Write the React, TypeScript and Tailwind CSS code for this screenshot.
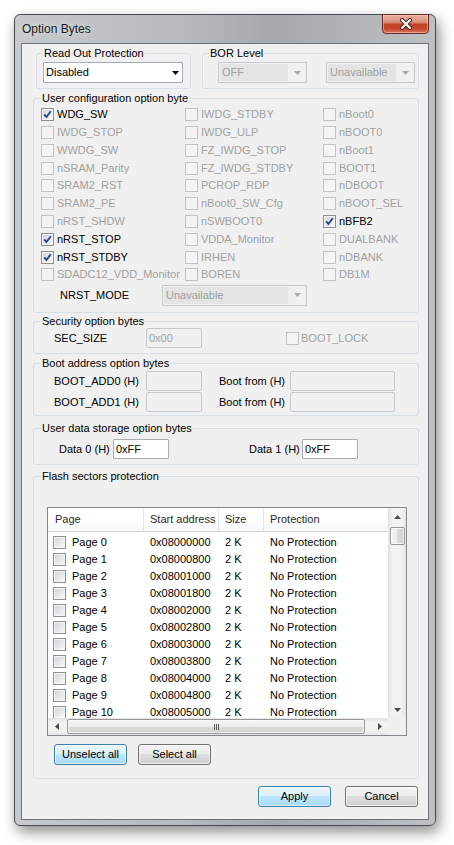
import React from 'react';

const F = "font-['Liberation_Sans',Arial,sans-serif]";

function Tri({ dir, color = '#4b4b4b' }: { dir: 'up' | 'down' | 'left' | 'right'; color?: string }) {
  if (dir === 'up')
    return (
      <svg width="7" height="4" viewBox="0 0 7 4" className="block">
        <path d="M0 4 L3.5 0 L7 4Z" fill={color} />
      </svg>
    );
  if (dir === 'down')
    return (
      <svg width="7" height="4" viewBox="0 0 7 4" className="block">
        <path d="M0 0 L3.5 4 L7 0Z" fill={color} />
      </svg>
    );
  if (dir === 'left')
    return (
      <svg width="4" height="7" viewBox="0 0 4 7" className="block">
        <path d="M4 0 L0 3.5 L4 7Z" fill={color} />
      </svg>
    );
  return (
    <svg width="4" height="7" viewBox="0 0 4 7" className="block">
      <path d="M0 0 L4 3.5 L0 7Z" fill={color} />
    </svg>
  );
}

function CheckMark() {
  return (
    <svg width="13" height="13" viewBox="0 0 13 13" className="absolute left-[-1px] top-[-1px]">
      <path d="M3.2 6.4 L5.4 9 L9.8 3.2" stroke="#2a4590" strokeWidth="1.9" fill="none" />
    </svg>
  );
}

function Box({ checked = false, disabled = false }: { checked?: boolean; disabled?: boolean }) {
  if (disabled)
    return (
      <span className="relative block w-[13px] h-[13px] shrink-0 border border-[#c3c3c3] bg-[#f4f4f4]">
        {checked && <CheckMark />}
      </span>
    );
  return (
    <span className="relative block w-[13px] h-[13px] shrink-0 border border-[#8e8f8f] bg-[#f6f6f6] p-[1px]">
      <span className="block w-full h-full bg-[linear-gradient(135deg,#d3d6da,#f6f6f7)]" />
      {checked && <CheckMark />}
    </span>
  );
}

function Group({
  label,
  cls,
  lx = 'left-[7px]',
  children,
}: {
  label: string;
  cls: string;
  lx?: string;
  children?: React.ReactNode;
}) {
  return (
    <div className={`relative border border-[#d5dfe5] rounded-[3px] ${cls}`}>
      <span className={`absolute top-[-7px] ${lx} px-[1px] bg-[#f0f0f0] leading-[13px] whitespace-nowrap`}>{label}</span>
      {children}
    </div>
  );
}

function Combo({ w, text, disabled = false }: { w: string; text: string; disabled?: boolean }) {
  if (!disabled)
    return (
      <div className={`${w} h-[21px] border border-[#a5acb5] bg-white flex items-center justify-between pl-[2px] pr-[3px] rounded-[1px]`}>
        <span>{text}</span>
        <Tri dir="down" color="#000" />
      </div>
    );
  return (
    <div className={`${w} h-[21px] border border-[#c5c9cd] bg-[#f0f0f0] flex items-center rounded-[1px]`}>
      <div className="flex-1 h-[17px] ml-[1px] bg-[#e4e4e4] text-[#a0a0a0] flex items-center pl-[2px]">{text}</div>
      <div className="w-[18px] flex justify-center">
        <Tri dir="down" color="#a8a8a8" />
      </div>
    </div>
  );
}

function Edit({ w, text = '', disabled = false }: { w: string; text?: string; disabled?: boolean }) {
  if (disabled)
    return (
      <div className={`${w} h-[20px] border border-[#c5c9cd] bg-[#f0f0f0] rounded-[2px] flex items-center pl-[2px] text-[#a0a0a0]`}>
        {text}
      </div>
    );
  return (
    <div className={`${w} h-[20px] border border-[#abadb3] bg-white rounded-[1px] flex items-center pl-[2px]`}>{text}</div>
  );
}

function Btn({ label, blue = false }: { label: string; blue?: boolean }) {
  return blue ? (
    <div className="w-[73px] h-[21px] rounded-[3px] border border-[#3c7fb1] bg-[linear-gradient(#eaf6fd_0%,#d9f0fc_50%,#bee6fd_50%,#a7d9f5_100%)] shadow-[inset_0_0_0_1px_rgba(255,255,255,0.6)] flex items-center justify-center">
      {label}
    </div>
  ) : (
    <div className="w-[73px] h-[21px] rounded-[3px] border border-[#707070] bg-[linear-gradient(#f2f2f2_0%,#ebebeb_50%,#dddddd_50%,#cfcfcf_100%)] shadow-[inset_0_0_0_1px_rgba(255,255,255,0.7)] flex items-center justify-center">
      {label}
    </div>
  );
}

type O = { t: string; c?: boolean; e?: boolean };
const col1: O[] = [
  { t: 'WDG_SW', c: true, e: true },
  { t: 'IWDG_STOP' },
  { t: 'WWDG_SW' },
  { t: 'nSRAM_Parity' },
  { t: 'SRAM2_RST' },
  { t: 'SRAM2_PE' },
  { t: 'nRST_SHDW' },
  { t: 'nRST_STOP', c: true, e: true },
  { t: 'nRST_STDBY', c: true, e: true },
  { t: 'SDADC12_VDD_Monitor' },
];
const col2: O[] = [
  { t: 'IWDG_STDBY' },
  { t: 'IWDG_ULP' },
  { t: 'FZ_IWDG_STOP' },
  { t: 'FZ_IWDG_STDBY' },
  { t: 'PCROP_RDP' },
  { t: 'nBoot0_SW_Cfg' },
  { t: 'nSWBOOT0' },
  { t: 'VDDA_Monitor' },
  { t: 'IRHEN' },
  { t: 'BOREN' },
];
const col3: O[] = [
  { t: 'nBoot0' },
  { t: 'nBOOT0' },
  { t: 'nBoot1' },
  { t: 'BOOT1' },
  { t: 'nDBOOT' },
  { t: 'nBOOT_SEL' },
  { t: 'nBFB2', c: true, e: true },
  { t: 'DUALBANK' },
  { t: 'nDBANK' },
  { t: 'DB1M' },
];

function Opt({ o }: { o: O }) {
  return (
    <div className="flex items-center h-[17.78px] gap-[3px] whitespace-nowrap">
      <Box checked={!!o.c} disabled={!o.e} />
      <span className={o.e ? 'text-black' : 'text-[#a0a0a0]'}>{o.t}</span>
    </div>
  );
}

const pages = Array.from({ length: 11 }, (_, i) => ({
  p: `Page ${i}`,
  a: '0x' + (0x08000000 + i * 0x800).toString(16).toUpperCase().padStart(8, '0'),
}));

function CloseBtn() {
  return (
    <div className="mr-[6px] mt-[-1px] w-[47px] h-[20px] rounded-b-[4px] border border-[#6a2a1f] bg-[linear-gradient(#eab0a2_0%,#dc8e7b_40%,#c4442b_52%,#c3452c_75%,#d9785c_100%)] shadow-[inset_0_0_0_1px_rgba(255,220,210,0.45)] flex items-center justify-center">
      <svg width="14" height="12" viewBox="0 0 14 12" className="block">
        <path d="M3 2 L11 10 M11 2 L3 10" stroke="#4a2a26" strokeWidth="4" strokeLinecap="round" />
        <path d="M3 2 L11 10 M11 2 L3 10" stroke="#ffffff" strokeWidth="2" strokeLinecap="round" />
      </svg>
    </div>
  );
}

export default function App() {
  const cells: React.ReactNode[] = [];
  for (let i = 0; i < 10; i++) {
    cells.push(<Opt key={'a' + i} o={col1[i]} />);
    cells.push(<Opt key={'b' + i} o={col2[i]} />);
    cells.push(<Opt key={'c' + i} o={col3[i]} />);
  }
  return (
    <div className={`w-[454px] h-[845px] bg-white pt-[14px] pl-[14px] text-[11px] leading-[13px] text-black ${F}`}>
      <div className="w-[422px] h-[812px] rounded-[6px] border border-[#474b4f] shadow-[3px_6px_14px_rgba(0,0,0,0.45)] bg-[linear-gradient(to_right,#c6cacd,#b6babd_40%,#a5a9ad_62%,#bdc1c4)] flex flex-col">
        <div className="h-[28px] flex justify-between">
          <div className="self-center pl-[7px] text-[12px] text-[#1a1a1a] [text-shadow:0_0_6px_rgba(255,255,255,0.8)]">Option Bytes</div>
          <CloseBtn />
        </div>
        <div className="ml-[6px] w-[408px] h-[777px] border border-[#6f7377] bg-[#f0f0f0] flex flex-col">
          {/* Top row */}
          <div className="mt-[9px] ml-[14px] flex gap-[11px]">
            <Group label="Read Out Protection" cls="w-[155px] h-[36px] pl-[6px] pt-[8px]" lx="left-[6px]">
              <Combo w="w-[140px]" text="Disabled" />
            </Group>
            <Group label="BOR Level" cls="w-[217px] h-[36px] pl-[15px] pt-[8px] flex gap-[19px]" lx="left-[6px]">
              <Combo w="w-[89px]" text="OFF" disabled />
              <Combo w="w-[89px]" text="Unavailable" disabled />
            </Group>
          </div>

          {/* User configuration */}
          <Group label="User configuration option byte" cls="mt-[9px] ml-[11px] w-[386px] h-[215px] pt-[7px] pl-[7px]">
            <div className="grid grid-cols-[144px_138px_1fr]">{cells}</div>
            <div className="mt-[1px] flex items-center h-[21px]">
              <span className="ml-[19px] w-[102px]">NRST_MODE</span>
              <Combo w="w-[145px]" text="Unavailable" disabled />
            </div>
          </Group>

          {/* Security */}
          <Group label="Security option bytes" cls="mt-[8px] ml-[11px] w-[386px] h-[33px] pt-[6px] pl-[20px]">
            <div className="flex items-center h-[20px]">
              <span className="w-[92px]">SEC_SIZE</span>
              <Edit w="w-[56px]" text="0x00" disabled />
              <div className="ml-[84px] flex items-center gap-[2px]">
                <Box disabled />
                <span className="text-[#a0a0a0]">BOOT_LOCK</span>
              </div>
            </div>
          </Group>

          {/* Boot address */}
          <Group label="Boot address option bytes" cls="mt-[9px] ml-[11px] w-[386px] h-[53px] pt-[7px] pl-[20px] flex flex-col gap-[1px]">
            {['BOOT_ADD0 (H)', 'BOOT_ADD1 (H)'].map((l) => (
              <div key={l} className="flex items-center h-[20px]">
                <span className="w-[92px]">{l}</span>
                <Edit w="w-[56px]" disabled />
                <span className="ml-[17px] w-[71px]">Boot from (H)</span>
                <Edit w="w-[105px]" disabled />
              </div>
            ))}
          </Group>

          {/* User data */}
          <Group label="User data storage option bytes" cls="mt-[12px] ml-[11px] w-[386px] h-[37px] pt-[10px] pl-[25px]">
            <div className="flex items-center h-[20px]">
              <span className="w-[54px]">Data 0 (H)</span>
              <Edit w="w-[56px]" text="0xFF" />
              <span className="ml-[80px] w-[53px]">Data 1 (H)</span>
              <Edit w="w-[56px]" text="0xFF" />
            </div>
          </Group>

          {/* Flash sectors */}
          <Group label="Flash sectors protection" cls="mt-[11px] ml-[11px] w-[386px] h-[303px] pt-[30px]">
            <div className="ml-[13px] w-[360px] h-[229px] border border-[#828790] bg-white flex flex-col">
              <div className="flex h-[210px]">
                <div className="w-[340px] h-[210px] overflow-hidden">
                  <div className="flex h-[24px] border-b border-[#d5d5d5] bg-[linear-gradient(#ffffff,#ffffff_50%,#f6f7f9)] text-[#2b2b2b]">
                    <div className="w-[96px] border-r border-[#e3e6ea] pl-[7px] flex items-center">Page</div>
                    <div className="w-[75px] border-r border-[#e3e6ea] pl-[6px] flex items-center whitespace-nowrap">Start address</div>
                    <div className="w-[45px] border-r border-[#e3e6ea] pl-[6px] flex items-center">Size</div>
                    <div className="flex-1 pl-[6px] flex items-center">Protection</div>
                  </div>
                  <div className="pt-[2px]">
                    {pages.map((r) => (
                      <div key={r.p} className="flex h-[17px] items-center whitespace-nowrap">
                        <div className="w-[96px] pl-[5px] flex items-center gap-[6px]">
                          <Box />
                          <span>{r.p}</span>
                        </div>
                        <div className="w-[75px] pl-[6px]">{r.a}</div>
                        <div className="w-[45px] pl-[6px]">2 K</div>
                        <div className="flex-1 pl-[6px]">No Protection</div>
                      </div>
                    ))}
                  </div>
                </div>
                <div className="w-[18px] h-[210px] bg-[linear-gradient(to_right,#e2e2e2,#f2f2f2_25%,#f2f2f2_75%,#e6e6e6)] flex flex-col items-center">
                  <div className="h-[17px] w-full flex items-center justify-center">
                    <Tri dir="up" />
                  </div>
                  <div className="mt-[2px] w-[15px] h-[18px] rounded-[2px] border border-[#979797] bg-[linear-gradient(to_right,#f5f5f5,#ebebeb_50%,#dcdcdc_50%,#d2d2d2)] shadow-[inset_0_0_0_1px_rgba(255,255,255,0.7)]" />
                  <div className="flex-1" />
                  <div className="h-[17px] w-full flex items-center justify-center">
                    <Tri dir="down" />
                  </div>
                </div>
              </div>
              <div className="flex h-[17px]">
                <div className="w-[340px] h-[17px] bg-[linear-gradient(#e2e2e2,#f2f2f2_25%,#f2f2f2_75%,#e6e6e6)] flex items-center">
                  <div className="w-[17px] h-full flex items-center justify-center">
                    <Tri dir="left" />
                  </div>
                  <div className="ml-[2px] w-[298px] h-[15px] rounded-[2px] border border-[#979797] bg-[linear-gradient(#f5f5f5,#ebebeb_50%,#dcdcdc_50%,#d2d2d2)] shadow-[inset_0_0_0_1px_rgba(255,255,255,0.7)] flex items-center justify-center gap-[1px]">
                    <span className="block w-[1px] h-[6px] bg-[#5a5a5a]" />
                    <span className="block w-[1px] h-[6px] bg-[#5a5a5a]" />
                    <span className="block w-[1px] h-[6px] bg-[#5a5a5a]" />
                  </div>
                  <div className="flex-1" />
                  <div className="w-[17px] h-full flex items-center justify-center">
                    <Tri dir="right" />
                  </div>
                </div>
                <div className="w-[18px] h-[17px] bg-[#f0f0f0]" />
              </div>
            </div>
            <div className="mt-[8px] ml-[20px] flex gap-[11px]">
              <Btn label="Unselect all" blue />
              <Btn label="Select all" />
            </div>
          </Group>

          <div className="mt-[7px] mr-[10px] flex justify-end gap-[14px]">
            <Btn label="Apply" blue />
            <Btn label="Cancel" />
          </div>
        </div>
      </div>
    </div>
  );
}
